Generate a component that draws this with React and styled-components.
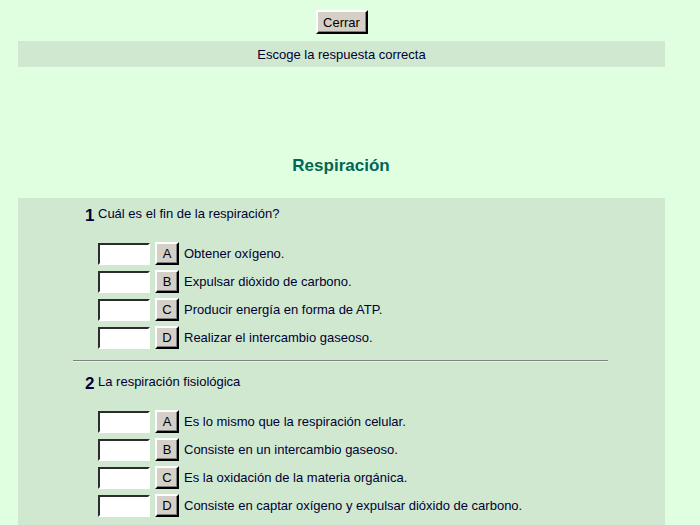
import styled, { createGlobalStyle } from "styled-components";

const GlobalStyle = createGlobalStyle`
  body {
    margin: 0;
    background: #e0ffe0;
    font-family: "Liberation Sans", Arial, sans-serif;
    color: #000033;
  }
`;

const Page = styled.div`
  width: 700px;
  height: 525px;
  overflow: hidden;
`;

const TopBar = styled.div`
  display: flex;
  justify-content: center;
  padding-top: 10px;
  padding-right: 17px;
`;

const RaisedButton = styled.button`
  font-family: "Liberation Sans", Arial, sans-serif;
  font-size: 13px;
  color: #000;
  background: #d4d0c8;
  border: 2px outset #e8e6e0;
  border-color: #fff #404040 #404040 #fff;
  box-shadow: inset -1px -1px 0 #808080;
  padding: 0;
  width: ${(p) => p.$w || 24}px;
  height: ${(p) => p.$h || 23}px;
  cursor: pointer;
`;

const Band = styled.div`
  margin: 7px 35px 0 18px;
  height: 26px;
  background: #d0e8d0;
  display: flex;
  align-items: center;
  justify-content: center;
  font-size: 13px;
`;

const Title = styled.h1`
  margin: 88px 0 0;
  padding-right: 18px;
  text-align: center;
  font-size: 17px;
  font-weight: bold;
  color: #006655;
  height: 43px;
  line-height: 22px;
`;

const Panel = styled.div`
  margin-left: 18px;
  width: 647px;
  background: #d0e8d0;
  padding-top: 5px;
  padding-bottom: 20px;
`;

const Question = styled.div`
  padding-left: 67px;
`;

const Prompt = styled.div`
  display: flex;
  align-items: baseline;
  font-size: 13px;
  height: 39px;
`;

const Num = styled.span`
  font-size: 17px;
  font-weight: bold;
  width: 13px;
  position: relative;
  top: 3px;
`;

const Options = styled.div`
  padding-left: 13px;
  display: flex;
  flex-direction: column;
  gap: 5px;
`;

const Row = styled.div`
  display: flex;
  align-items: center;
  height: 23px;
  font-size: 13px;
`;

const AnswerBox = styled.input`
  width: 52px;
  height: 22px;
  box-sizing: border-box;
  border: 2px inset #fff;
  border-color: #808080 #fff #fff #808080;
  background: #fff;
  margin: 0 5px 0 0;
  padding: 0 2px;
`;

const Label = styled.span`
  margin-left: 5px;
`;

const Divider = styled.hr`
  width: 535px;
  margin: 11px 0 9px 55px;
  border: none;
  border-top: 1px solid #808080;
  border-bottom: 1px solid #e8f4e8;
`;

const questions = [
  {
    n: 1,
    text: "Cuál es el fin de la respiración?",
    options: [
      "Obtener oxígeno.",
      "Expulsar dióxido de carbono.",
      "Producir energía en forma de ATP.",
      "Realizar el intercambio gaseoso.",
    ],
  },
  {
    n: 2,
    text: "La respiración fisiológica",
    options: [
      "Es lo mismo que la respiración celular.",
      "Consiste en un intercambio gaseoso.",
      "Es la oxidación de la materia orgánica.",
      "Consiste en captar oxígeno y expulsar dióxido de carbono.",
    ],
  },
];

const letters = ["A", "B", "C", "D"];

export default function App() {
  return (
    <Page>
      <GlobalStyle />
      <TopBar>
        <RaisedButton $w={52} $h={24}>Cerrar</RaisedButton>
      </TopBar>
      <Band>Escoge la respuesta correcta</Band>
      <Title>Respiración</Title>
      <Panel>
        {questions.map((q, qi) => (
          <div key={q.n}>
            {qi > 0 && <Divider />}
            <Question>
              <Prompt>
                <Num>{q.n}</Num>
                {q.text}
              </Prompt>
              <Options>
                {q.options.map((o, i) => (
                  <Row key={i}>
                    <AnswerBox type="text" />
                    <RaisedButton>{letters[i]}</RaisedButton>
                    <Label>{o}</Label>
                  </Row>
                ))}
              </Options>
            </Question>
          </div>
        ))}
      </Panel>
    </Page>
  );
}
